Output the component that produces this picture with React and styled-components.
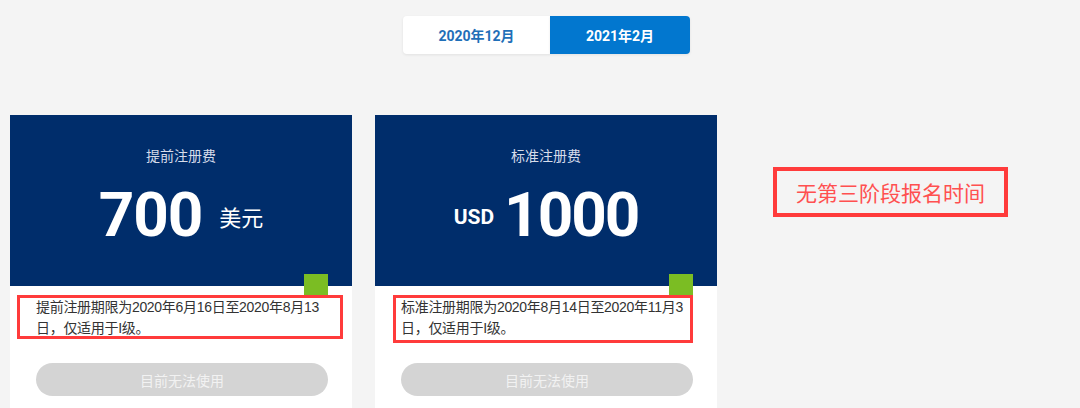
import React from 'react'
import styled, { createGlobalStyle } from 'styled-components'

const GlobalStyle = createGlobalStyle`
  html, body {
    margin: 0;
    padding: 0;
    background: #f4f4f4;
    font-family: "Liberation Sans", "Noto Sans CJK SC", sans-serif;
  }
`

const Page = styled.div`
  width: 1080px;
  height: 408px;
  overflow: hidden;
  padding-top: 16px;
  box-sizing: border-box;
`

const Tabs = styled.div`
  display: flex;
  justify-content: center;
  padding-left: 13px;
`

const Tab = styled.div`
  width: ${p => p.$w}px;
  height: 38px;
  display: flex;
  align-items: center;
  justify-content: center;
  font-size: 14px;
  font-weight: bold;
  font-family: Roboto, "Noto Sans CJK SC", sans-serif;
  color: ${p => (p.$active ? '#ffffff' : '#1f6fb8')};
  background: ${p => (p.$active ? '#0277cf' : '#ffffff')};
  border-radius: ${p => (p.$active ? '0 4px 4px 0' : '4px 0 0 4px')};
  box-shadow: 0 1px 3px rgba(0, 0, 0, 0.08);
`

const Row = styled.div`
  display: flex;
  align-items: flex-start;
  gap: 23px;
  margin-top: 61px;
  padding-left: 10px;
`

const Card = styled.div`
  width: 342px;
  background: #ffffff;
`

const Header = styled.div`
  height: 171px;
  background: #002d6b;
  display: flex;
  flex-direction: column;
  align-items: center;
  padding-top: 31px;
  box-sizing: border-box;
`

const Label = styled.div`
  font-size: 14px;
  color: #d6dcea;
  font-family: "Noto Sans CJK SC", sans-serif;
  line-height: 18px;
`

const Price = styled.div`
  display: flex;
  align-items: center;
  gap: ${p => p.$gap}px;
  margin-top: 20px;
  color: #ffffff;
`

const Amount = styled.span`
  font-family: Roboto, "Liberation Sans", sans-serif;
  font-weight: bold;
  font-size: 62px;
  line-height: 62px;
  letter-spacing: ${p => p.$ls}px;
`

const Unit = styled.span`
  font-family: "Noto Sans CJK SC", sans-serif;
  font-size: 22px;
  margin-top: 2px;
`

const Currency = styled.span`
  font-family: Roboto, "Liberation Sans", sans-serif;
  font-weight: bold;
  font-size: 21px;
  margin-top: 4px;
`

const Body = styled.div`
  position: relative;
  padding: 11px 24px 12px 26px;
`

const Marker = styled.div`
  position: absolute;
  top: -12px;
  right: 24px;
  width: 24px;
  height: 24px;
  background: #7bbd23;
`

const Highlight = styled.div`
  position: absolute;
  left: ${p => p.$left}px;
  top: 9px;
  width: ${p => p.$w}px;
  height: ${p => p.$h}px;
  border: 3px solid #ff3b3b;
  box-sizing: border-box;
`

const Note = styled.p`
  margin: 0;
  font-size: 14px;
  line-height: 21px;
  color: #333333;
  width: ${p => p.$w}px;
  letter-spacing: -0.3px;
`

const Button = styled.div`
  margin-top: 24px;
  width: 292px;
  height: 33px;
  border-radius: 17px;
  background: #d4d4d4;
  color: #f2f2f2;
  font-size: 14px;
  font-family: "Noto Sans CJK SC", sans-serif;
  display: flex;
  align-items: center;
  justify-content: center;
`

const Callout = styled.div`
  margin-left: 33px;
  margin-top: 52px;
  width: 235px;
  height: 50px;
  border: 4px solid #ff3b3b;
  box-sizing: border-box;
  display: flex;
  align-items: center;
  justify-content: center;
  color: #ff5050;
  font-size: 21px;
  font-family: "Noto Sans CJK SC", serif;
`

const cards = [
  {
    label: '提前注册费',
    note: '提前注册期限为2020年6月16日至2020年8月13日，仅适用于I级。',
    box: { left: 7, w: 326, h: 44 },
    noteW: 292,
  },
  {
    label: '标准注册费',
    note: '标准注册期限为2020年8月14日至2020年11月3日，仅适用于I级。',
    box: { left: 18, w: 300, h: 48 },
    noteW: 292,
  },
]

export default function App() {
  return (
    <Page>
      <GlobalStyle />
      <Tabs>
        <Tab $w={147}>2020年12月</Tab>
        <Tab $w={140} $active>2021年2月</Tab>
      </Tabs>
      <Row>
        {cards.map((c, i) => (
          <Card key={c.label}>
            <Header>
              <Label>{c.label}</Label>
              {i === 0 ? (
                <Price $gap={17}>
                  <Amount $ls={-1}>700</Amount>
                  <Unit>美元</Unit>
                </Price>
              ) : (
                <Price $gap={10}>
                  <Currency>USD</Currency>
                  <Amount $ls={-2}>1000</Amount>
                </Price>
              )}
            </Header>
            <Body>
              <Marker />
              <Note $w={c.noteW}>{c.note}</Note>
              <Highlight $left={c.box.left} $w={c.box.w} $h={c.box.h} />
              <Button>目前无法使用</Button>
            </Body>
          </Card>
        ))}
        <Callout>无第三阶段报名时间</Callout>
      </Row>
    </Page>
  )
}
